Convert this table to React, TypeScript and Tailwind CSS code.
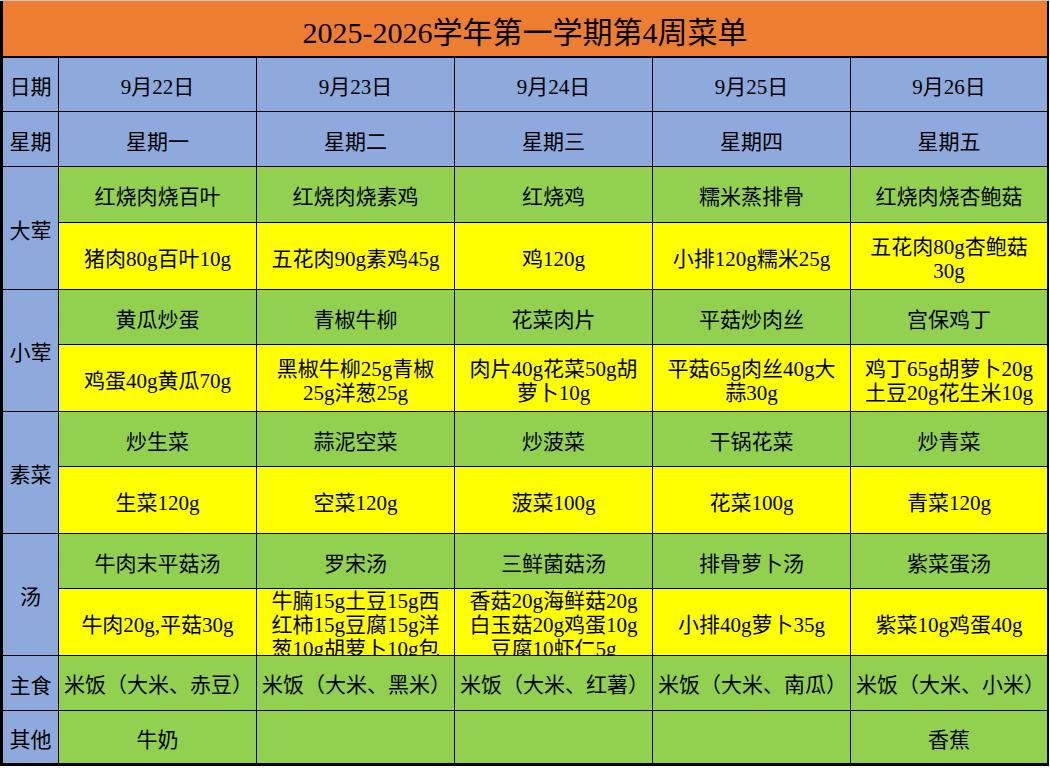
const days = [
  { date: '9月22日', week: '星期一' },
  { date: '9月23日', week: '星期二' },
  { date: '9月24日', week: '星期三' },
  { date: '9月25日', week: '星期四' },
  { date: '9月26日', week: '星期五' },
]

// each line of a cell is written out, as the sheet wraps it
type Lines = string[]

interface Section {
  label: string
  dish: string[]
  amount: Lines[]
}

const sections: Section[] = [
  {
    label: '大荤',
    dish: ['红烧肉烧百叶', '红烧肉烧素鸡', '红烧鸡', '糯米蒸排骨', '红烧肉烧杏鲍菇'],
    amount: [
      ['猪肉80g百叶10g'],
      ['五花肉90g素鸡45g'],
      ['鸡120g'],
      ['小排120g糯米25g'],
      ['五花肉80g杏鲍菇', '30g'],
    ],
  },
  {
    label: '小荤',
    dish: ['黄瓜炒蛋', '青椒牛柳', '花菜肉片', '平菇炒肉丝', '宫保鸡丁'],
    amount: [
      ['鸡蛋40g黄瓜70g'],
      ['黑椒牛柳25g青椒', '25g洋葱25g'],
      ['肉片40g花菜50g胡', '萝卜10g'],
      ['平菇65g肉丝40g大', '蒜30g'],
      ['鸡丁65g胡萝卜20g', '土豆20g花生米10g'],
    ],
  },
  {
    label: '素菜',
    dish: ['炒生菜', '蒜泥空菜', '炒菠菜', '干锅花菜', '炒青菜'],
    amount: [['生菜120g'], ['空菜120g'], ['菠菜100g'], ['花菜100g'], ['青菜120g']],
  },
  {
    label: '汤',
    dish: ['牛肉末平菇汤', '罗宋汤', '三鲜菌菇汤', '排骨萝卜汤', '紫菜蛋汤'],
    amount: [
      ['牛肉20g,平菇30g'],
      ['牛腩15g土豆15g西', '红柿15g豆腐15g洋', '葱10g胡萝卜10g包'],
      ['香菇20g海鲜菇20g', '白玉菇20g鸡蛋10g', '豆腐10虾仁5g'],
      ['小排40g萝卜35g'],
      ['紫菜10g鸡蛋40g'],
    ],
  },
]

const staples = ['米饭（大米、赤豆）', '米饭（大米、黑米）', '米饭（大米、红薯）', '米饭（大米、南瓜）', '米饭（大米、小米）']
const others = ['牛奶', '', '', '', '香蕉']

function Cell({ className = '', children }: { className?: string; children?: React.ReactNode }) {
  return (
    <div className={`flex items-center justify-center overflow-hidden text-center leading-[24px] pt-[5px] ${className}`}>
      <div>{children}</div>
    </div>
  )
}

function MultiLine({ lines }: { lines: Lines }) {
  return (
    <>
      {lines.map((l, i) => (
        <div key={i} className="whitespace-nowrap">
          {l}
        </div>
      ))}
    </>
  )
}

export default function App() {
  return (
    <div className="w-[1050px] h-[768px] bg-white text-black font-['Liberation_Serif','Noto_Sans_CJK_SC',serif] text-[21px]">
      <div className="h-px w-full bg-[#c8c8c8]" />
      <div className="w-[1049px] border-l-[3px] border-r-2 border-b-[3px] border-black">
        <div className="h-[57px] bg-[#ed7d31] border-b-2 border-black flex items-center justify-center pt-2 text-[30px]">
          2025-2026学年第一学期第4周菜单
        </div>
        <div className="grid grid-cols-[55px_197px_197px_197px_197px_196px] grid-rows-[53px_54px_55px_66px_54px_66px_54px_66px_54px_66px_54px_52px] gap-px bg-black">
          <Cell className="bg-[#8ea9db]">日期</Cell>
          {days.map((d) => (
            <Cell key={d.date} className="bg-[#8ea9db]">
              {d.date}
            </Cell>
          ))}
          <Cell className="bg-[#8ea9db]">星期</Cell>
          {days.map((d) => (
            <Cell key={d.week} className="bg-[#8ea9db]">
              {d.week}
            </Cell>
          ))}

          {sections.map((s) => (
            <>
              <Cell key={s.label} className="bg-[#8ea9db] row-span-2">
                {s.label}
              </Cell>
              {s.dish.map((d, i) => (
                <Cell key={s.label + 'd' + i} className="bg-[#92d050]">
                  {d}
                </Cell>
              ))}
              {s.amount.map((a, i) => (
                <Cell key={s.label + 'a' + i} className="bg-[#ffff00]">
                  <MultiLine lines={a} />
                </Cell>
              ))}
            </>
          ))}

          <Cell className="bg-[#8ea9db]">主食</Cell>
          {staples.map((s, i) => (
            <div key={i} className="bg-[#92d050] flex items-center pl-[5px] pt-[5px] whitespace-nowrap overflow-hidden">
              {s}
            </div>
          ))}
          <Cell className="bg-[#8ea9db]">其他</Cell>
          {others.map((o, i) => (
            <Cell key={i} className="bg-[#92d050]">
              {o}
            </Cell>
          ))}
        </div>
      </div>
    </div>
  )
}
